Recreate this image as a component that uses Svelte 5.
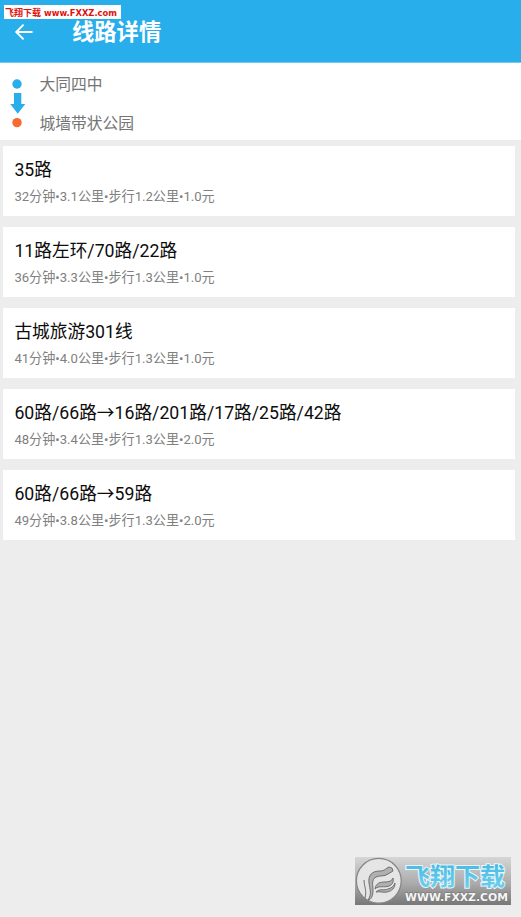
<script>
	const stops = { from: '大同四中', to: '城墙带状公园' };

	const routes = [
		{ name: '35路', info: ['32分钟', '3.1公里', '步行1.2公里', '1.0元'] },
		{ name: '11路左环/70路/22路', info: ['36分钟', '3.3公里', '步行1.3公里', '1.0元'] },
		{ name: '古城旅游301线', info: ['41分钟', '4.0公里', '步行1.3公里', '1.0元'] },
		{ name: '60路/66路→16路/201路/17路/25路/42路', info: ['48分钟', '3.4公里', '步行1.3公里', '2.0元'] },
		{ name: '60路/66路→59路', info: ['49分钟', '3.8公里', '步行1.3公里', '2.0元'] }
	];
</script>

<div class="screen">
	<header class="bar">
		<button class="back" aria-label="返回">
			<svg width="20" height="18" viewBox="0 0 20 18">
				<path d="M18.5 9H2.4M9.6 1.6 2.2 9l7.4 7.4" fill="none" stroke="#fff" stroke-width="1.9" />
			</svg>
		</button>
		<h1>线路详情</h1>
		<div class="stamp">
			<svg width="117" height="14" viewBox="0 0 117 14">
				<text class="stamp-cn" x="1" y="11" textLength="36">飞翔下载</text>
				<text class="stamp-url" x="40" y="11" textLength="73" lengthAdjust="spacingAndGlyphs">www.FXXZ.com</text>
			</svg>
		</div>
	</header>

	<section class="trip">
		<svg class="marks" width="16" height="52" viewBox="0 0 16 52">
			<circle cx="7" cy="7" r="4.7" fill="#29aeec" />
			<path d="M4 16h7.3v11h4L7.7 36.7.3 27H4z" fill="#29aeec" />
			<circle cx="7" cy="45.6" r="4.7" fill="#f76b30" />
		</svg>
		<div class="stops">
			<span>{stops.from}</span>
			<span>{stops.to}</span>
		</div>
	</section>

	<main class="routes">
		{#each routes as route}
			<article class="route">
				<h2>{route.name}</h2>
				<p>{route.info.join('•')}</p>
			</article>
		{/each}
	</main>

	<svg class="watermark" width="156" height="49" viewBox="0 0 156 49">
		<defs>
			<linearGradient id="plate" x1="0" y1="0" x2="0" y2="1">
				<stop offset="0" stop-color="#d6d6d6" />
				<stop offset="0.55" stop-color="#ababab" />
				<stop offset="1" stop-color="#777" />
			</linearGradient>
			<linearGradient id="sky" x1="0" y1="0" x2="0" y2="1">
				<stop offset="0" stop-color="#3fb4e0" />
				<stop offset="1" stop-color="#74d2ee" />
			</linearGradient>
		</defs>
		<rect width="156" height="48" fill="url(#plate)" />
		<circle cx="23.8" cy="23.8" r="22.4" fill="#e5e5e5" stroke="#858585" stroke-width="1.2" />
		<g fill="#b0b0b0" stroke="#707070" stroke-width="1" stroke-linejoin="round">
			<path d="M13 43c4-6 2-10 1-17-1-8 3-12 11-12 5 0 6-3 9-4l3 1 1 3-5 3c-4 3-8 1-12 3-5 3-3 8-3 13 0 6-2 10-5 10z" />
			<path d="M9 23c0 6 3 10 1 18" fill="none" />
			<path d="M20 32c1-6 5-7 10-7 4 0 7-1 8-4 1 4-1 7-4 8-5 2-10-1-14 3z" />
			<path d="M21 35c4-4 8-1 12-3 4-1 6-3 7-6 0 5-3 8-8 9-4 1-7-1-11 0z" />
		</g>
		<text class="mark-cn" x="50" y="28" textLength="100" lengthAdjust="spacingAndGlyphs">飞翔下载</text>
		<text class="mark-url" x="50" y="44" textLength="103" lengthAdjust="spacingAndGlyphs">WWW.FXXZ.COM</text>
	</svg>
</div>

<style>
	:global(body) {
		background: #ededed;
	}

	.screen {
		position: relative;
		box-sizing: border-box;
		height: 917px;
		overflow: hidden;
		background: #ededed;
		font-family: Roboto, 'Noto Sans CJK SC', sans-serif;
	}

	.bar {
		display: flex;
		align-items: center;
		box-sizing: border-box;
		height: 63px;
		padding-left: 14px;
		background: #29aeec;
		border-bottom: 1px solid #75c8ee;
	}

	.back {
		display: flex;
		width: 58px;
		padding: 2px 0 0;
		background: none;
		border: none;
	}

	h1 {
		margin: 0;
		padding-top: 1px;
		font-size: 22.3px;
		font-weight: 700;
		line-height: 32px;
		color: #fff;
	}

	.stamp {
		position: absolute;
		top: 5px;
		left: 4px;
		width: 117px;
		height: 14px;
		background: #fff;
	}

	.stamp svg {
		display: block;
		overflow: visible;
	}

	.stamp-cn {
		font: 700 9px 'Noto Sans CJK SC', sans-serif;
		fill: #e01010;
	}

	.stamp-url {
		font: 700 9px 'DejaVu Sans', sans-serif;
		fill: #e01010;
	}

	.trip {
		display: flex;
		box-sizing: border-box;
		height: 77px;
		padding: 14px 0 0 10px;
		background: #fff;
	}

	.stops {
		display: flex;
		flex-direction: column;
		gap: 15px;
		margin: -4px 0 0 13.5px;
		font-size: 15.75px;
		line-height: 24px;
		color: #757575;
	}

	.routes {
		display: flex;
		flex-direction: column;
		gap: 11px;
		padding: 6px 6px 0 3px;
	}

	.route {
		box-sizing: border-box;
		height: 70px;
		padding: 11px 11px 0 11.4px;
		background: #fff;
	}

	h2 {
		margin: 0;
		font-size: 17.7px;
		font-weight: 400;
		line-height: 26px;
		color: #0c0c0c;
	}

	p {
		margin: 4px 0 0;
		font-size: 13.1px;
		line-height: 20px;
		color: #808080;
	}

	.watermark {
		position: absolute;
		top: 857px;
		left: 355px;
	}

	.mark-cn {
		font: 700 24px 'Noto Sans CJK SC', sans-serif;
		fill: url(#sky);
		stroke: #e6f6fb;
		stroke-width: 2px;
		paint-order: stroke;
	}

	.mark-url {
		font: 700 10px 'DejaVu Sans', sans-serif;
		fill: #f5f5f5;
		stroke: #777;
		stroke-width: 1px;
		paint-order: stroke;
	}
</style>
